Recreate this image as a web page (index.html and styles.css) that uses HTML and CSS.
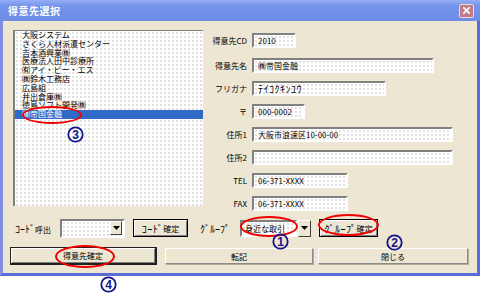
FILE: index.html
```html
<!DOCTYPE html>
<html lang="ja">
<head>
  <meta charset="UTF-8">
  <title>得意先選択</title>
  <link rel="stylesheet" href="styles.css">
</head>
<body>
  <div class="page">
    <div class="window">
      <div class="titlebar">
        <span class="title">得意先選択</span>
        <span class="close-btn">
          <svg viewBox="0 0 10 10" width="9" height="9">
            <path d="M1.5 1.5 L8.5 8.5 M8.5 1.5 L1.5 8.5" stroke="#fff" stroke-width="1.8"/>
          </svg>
        </span>
      </div>

      <div class="client">
        <div class="main">
          <ul class="listbox">
            <li>大阪システム</li>
            <li>さくら人材派遣センター</li>
            <li>吉本酒興業㈱</li>
            <li>医療法人田中診療所</li>
            <li>㈲アイ・ビー・エス</li>
            <li>㈱鈴木工務店</li>
            <li>広島組</li>
            <li>井出倉庫㈱</li>
            <li>徳島ソフト開発㈱</li>
            <li class="selected">㈱帝国金融</li>
          </ul>

          <div class="form">
            <label>得意先CD</label>
            <div class="field w-cd">2010</div>
            <label>得意先名</label>
            <div class="field w-name">㈱帝国金融</div>
            <label>フリガナ</label>
            <div class="field w-kana"><span class="hw">ﾃｲｺｸｷﾝﾕｳ</span></div>
            <label>〒</label>
            <div class="field w-zip">000-0002</div>
            <label>住所1</label>
            <div class="field w-addr">大阪市浪速区10-00-00</div>
            <label>住所2</label>
            <div class="field w-addr"></div>
            <label>TEL</label>
            <div class="field w-tel">06-371-XXXX</div>
            <label>FAX</label>
            <div class="field w-tel">06-371-XXXX</div>
          </div>
        </div>

        <div class="toolbar">
          <span class="tool-label code-label"><span class="hw">ｺｰﾄﾞ</span>呼出</span>
          <div class="combo code-combo">
            <span class="drop">
              <svg viewBox="0 0 7 4" width="7" height="4"><path d="M0 0h7L3.5 4z" fill="#000"/></svg>
            </span>
          </div>
          <button class="btn btn-dark code-btn"><span class="hw">ｺｰﾄﾞ</span>確定</button>
          <span class="tool-label group-label"><span class="hw">ｸﾞﾙｰﾌﾟ</span></span>
          <div class="field group-field">身近な取引</div>
          <span class="drop drop-single">
            <svg viewBox="0 0 7 4" width="7" height="4"><path d="M0 0h7L3.5 4z" fill="#000"/></svg>
          </span>
          <button class="btn btn-dark group-btn"><span class="hw">ｸﾞﾙｰﾌﾟ</span>確定</button>
        </div>

        <div class="actions">
          <button class="btn btn-dark btn-ok">得意先確定</button>
          <button class="btn btn-flat btn-copy">転記</button>
          <button class="btn btn-flat btn-close">閉じる</button>
        </div>
      </div>
    </div>

    <!-- annotation marks -->
    <span class="oval oval-3"></span>
    <span class="oval oval-1"></span>
    <span class="oval oval-2"></span>
    <span class="oval oval-4"></span>
    <svg class="num num-3" viewBox="0 0 17 17"><circle cx="8.5" cy="8.5" r="7.2"/><text x="8.5" y="13">3</text></svg>
    <svg class="num num-1" viewBox="0 0 17 17"><circle cx="8.5" cy="8.5" r="7.2"/><text x="8.5" y="13">1</text></svg>
    <svg class="num num-2" viewBox="0 0 17 17"><circle cx="8.5" cy="8.5" r="7.2"/><text x="8.5" y="13">2</text></svg>
    <svg class="num num-4" viewBox="0 0 17 17"><circle cx="8.5" cy="8.5" r="7.2"/><text x="8.5" y="13">4</text></svg>
  </div>
</body>
</html>
```

FILE: styles.css
```css
:root {
  --face: #ece6d3;
  --frame-blue: #5a6cd8;
  --shadow: #808080;
  --select: #3169c6;
  --mark-red: #f00000;
  --mark-blue: #14148c;
}

* {
  box-sizing: border-box;
}

body {
  margin: 0;
  background-color: #fff;
  font-family: "Noto Sans CJK JP", "Noto Sans", sans-serif;
  font-size: 8px;
  color: #000;
}

.page {
  position: relative;
  width: 480px;
  height: 302px;
}

.window {
  width: 480px;
}

/* half-width kana is narrow in this font, widen it a bit */
.hw {
  font-size: 10px;
  letter-spacing: 0.5px;
}

/* title bar */
.titlebar {
  height: 21px;
  display: flex;
  align-items: center;
  justify-content: space-between;
  padding: 0 6px 0 8px;
  background: linear-gradient(#95aef4, #7393ea 30%, #6d8de6);
  color: #fff;
}

.title {
  font-size: 10px;
  font-weight: bold;
  letter-spacing: 0.5px;
}

.close-btn {
  width: 15px;
  height: 14px;
  display: flex;
  align-items: center;
  justify-content: center;
  border: 1px solid #ead8de;
  border-radius: 2px;
  background-color: #c27c88;
}

/* client area */
.client {
  height: 255px;
  background-color: var(--face);
  border: 3px solid var(--frame-blue);
  border-top: none;
  border-left-color: #7f8ee0;
}

.main {
  display: flex;
  height: 197px;
  padding: 9px 0 0 10px;
}

.listbox {
  width: 190px;
  height: 176px;
  margin: 0;
  padding: 0;
  list-style: none;
  overflow: hidden;
  border-top: 1px solid var(--shadow);
  border-left: 2px solid var(--shadow);
  background: #fff radial-gradient(circle, #cfcfcf 0.6px, transparent 0.9px) 0 0 / 4px 4px;
}

.listbox li {
  height: 8.8px;
  line-height: 8.8px;
  padding-left: 7px;
  white-space: nowrap;
}

.listbox li.selected {
  background-color: var(--select);
  color: #fff;
}

.form {
  margin-left: 4px;
  padding-top: 3px;
  display: grid;
  grid-template-columns: 40px auto;
  grid-template-rows: 25px repeat(7, 23px);
  column-gap: 5px;
  align-items: start;
}

.form label {
  line-height: 15px;
  text-align: right;
  white-space: nowrap;
}

.field {
  height: 15px;
  padding-left: 4px;
  line-height: 11px;
  white-space: nowrap;
  border: 2px solid;
  border-color: var(--shadow) #fff #fff var(--shadow);
  background: #fff radial-gradient(circle, #cfcfcf 0.6px, transparent 0.9px) 0 0 / 4px 4px;
}

.w-cd { width: 44px; }
.w-name { width: 182px; }
.w-kana { width: 134px; }
.w-zip { width: 53px; }
.w-addr { width: 201px; }
.w-tel { width: 96px; }

/* group / code row */
.toolbar {
  height: 20px;
  display: flex;
  align-items: center;
  padding-left: 12px;
}

.toolbar > * {
  flex: none;
}

.tool-label {
  white-space: nowrap;
}

.tool-label .hw {
  letter-spacing: 0;
}

.code-label {
  width: 45px;
}

.combo {
  display: flex;
  align-items: center;
  justify-content: flex-end;
  height: 19px;
  padding-right: 1px;
  border: 2px solid;
  border-color: var(--shadow) #fff #fff var(--shadow);
  background: #fff radial-gradient(circle, #cfcfcf 0.6px, transparent 0.9px) 0 0 / 4px 4px;
}

.code-combo {
  width: 65px;
}

.drop {
  width: 12px;
  height: 14px;
  display: flex;
  align-items: center;
  justify-content: center;
  background-color: var(--face);
  border: 1px solid;
  border-color: #fff #404040 #404040 #fff;
}

.drop-single {
  width: 13px;
  height: 17px;
  margin-left: 1px;
}

.btn {
  display: flex;
  align-items: center;
  justify-content: center;
  padding: 0;
  font: inherit;
  color: #000;
  background-color: var(--face);
  white-space: nowrap;
}

.btn-dark {
  border: 1px solid #000;
  box-shadow: inset 1px 1px #fff, inset -1px -1px var(--shadow);
}

.code-btn {
  width: 55px;
  height: 18px;
  margin-left: 8px;
}

.group-label {
  width: 40px;
  margin-left: 12px;
}

.group-field {
  width: 57px;
  height: 17px;
  line-height: 13px;
  padding-left: 3px;
}

.group-btn {
  width: 59px;
  height: 18px;
  margin-left: 8px;
}

/* bottom buttons */
.actions {
  display: flex;
  align-items: center;
  height: 18px;
  margin-top: 9px;
  padding-left: 7px;
}

.btn-ok {
  width: 147px;
  height: 18px;
  border-width: 1px 2px 2px 1px;
  border-color: #202020;
}

.btn-flat {
  height: 16px;
  border: 1px solid;
  border-color: #fff #8a8a8a #8a8a8a #fff;
  box-shadow: 1px 1px #b0aca0;
}

.btn-copy {
  width: 148px;
  margin-left: 8px;
}

.btn-close {
  width: 150px;
  margin-left: 5px;
}

/* red ovals and circled numbers drawn over the screenshot */
.oval {
  position: absolute;
  border: 2px solid var(--mark-red);
  border-radius: 50%;
}

.oval-3 { left: 22px; top: 106px; width: 60px; height: 18px; }
.oval-1 { left: 240px; top: 216px; width: 58px; height: 21px; }
.oval-2 { left: 318px; top: 214px; width: 61px; height: 22px; }
.oval-4 { left: 55px; top: 245px; width: 60px; height: 23px; }

.num {
  position: absolute;
  width: 17px;
  height: 17px;
}

.num circle {
  fill: none;
  stroke: var(--mark-blue);
  stroke-width: 1.8;
}

.num text {
  font-family: "Liberation Sans", sans-serif;
  font-size: 12px;
  font-weight: bold;
  text-anchor: middle;
  fill: var(--mark-blue);
}

.num-3 { left: 67px; top: 126px; }
.num-1 { left: 272px; top: 233px; }
.num-2 { left: 386px; top: 234px; }
.num-4 { left: 100px; top: 276px; }
```
